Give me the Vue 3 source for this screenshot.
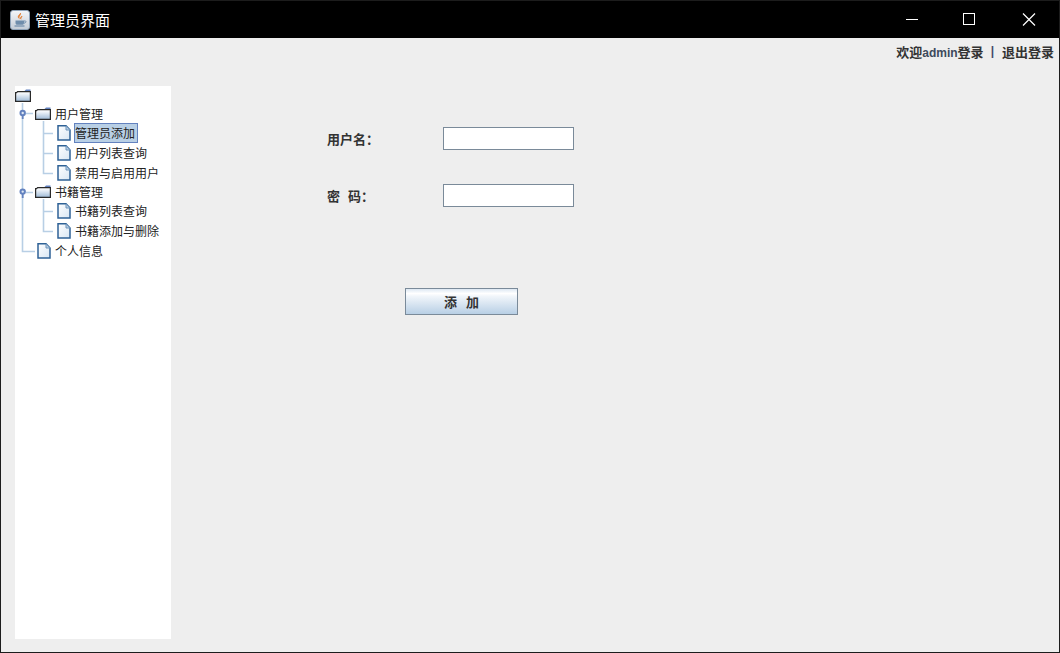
<script setup>
const rows = [
  { id: 'root', label: '', icon: 'folder', indent: 0, height: 18 },
  { id: 'users', label: '用户管理', icon: 'folder', indent: 20, height: 19 },
  { id: 'admin', label: '管理员添加', icon: 'file', indent: 42, height: 20, selected: true },
  { id: 'list', label: '用户列表查询', icon: 'file', indent: 42, height: 20 },
  { id: 'ban', label: '禁用与启用用户', icon: 'file', indent: 42, height: 19 },
  { id: 'books', label: '书籍管理', icon: 'folder', indent: 20, height: 19 },
  { id: 'booklist', label: '书籍列表查询', icon: 'file', indent: 42, height: 20 },
  { id: 'bookadd', label: '书籍添加与删除', icon: 'file', indent: 42, height: 20 },
  { id: 'me', label: '个人信息', icon: 'file', indent: 22, height: 20 }
]
</script>

<template>
  <div class="window">
    <header class="titlebar">
      <svg class="app-icon" width="20" height="20" viewBox="0 0 20 20">
        <defs>
          <linearGradient id="appbg" x1="0" y1="0" x2="0" y2="1">
            <stop offset="0" stop-color="#f4f6f9" />
            <stop offset="1" stop-color="#c3ccd6" />
          </linearGradient>
        </defs>
        <rect x="0.5" y="0.5" width="19" height="19" rx="2.5" fill="url(#appbg)" stroke="#8fa3b8" />
        <path d="M10.5 3c1 1.8-2.4 3 -1.2 5.6 -2-1.6-.8-3.2.2-4 .5-.5.9-1 1-1.6z M12 6c.3 1.2-1.6 1.8-.9 3.2-1.4-1-.4-2.3.9-3.2z" fill="#e0782a" stroke="#e0782a" stroke-width=".6" />
        <path d="M5.5 10.5h8.5v2.4c0 1.2-1 1.9-2.2 1.9H7.7c-1.2 0-2.2-.7-2.2-1.9z" fill="#6f8dab" />
        <path d="M14 11h1.4c.9 0 .9 2-1.4 2.2" fill="none" stroke="#6f8dab" />
        <path d="M4.5 16h10" stroke="#6f8dab" stroke-width="1.2" />
      </svg>
      <span class="title">管理员界面</span>
      <div class="controls">
        <svg class="ctl min" width="46" height="37" viewBox="0 0 46 37"><path d="M17 18.5h12" stroke="#fff" /></svg>
        <svg class="ctl" width="12" height="37" viewBox="0 0 12 37"><rect x="0.5" y="12.5" width="11" height="11" fill="none" stroke="#fff" /></svg>
        <svg class="ctl close" width="14" height="37" viewBox="0 0 14 37"><path d="M1 12.5l12 12M13 12.5l-12 12" stroke="#fff" stroke-width="1.2" /></svg>
      </div>
    </header>

    <div class="topbar">
      <span>欢迎<span class="latin">admin</span>登录</span>
      <span class="sep">|</span>
      <span>退出登录</span>
    </div>

    <main class="body">
      <aside class="tree">
        <svg class="lines" width="60" height="180" viewBox="0 0 60 180">
          <g stroke="#b8cfe5" stroke-width="1.6" fill="none">
            <path d="M7.5 17V165.5H20" />
            <path d="M11 27.5H18M11 106.5H18" />
            <path d="M28.5 35V87.5H38M28.5 47.5H38M28.5 67.5H38" />
            <path d="M28.5 113V145.5H38M28.5 125.5H38" />
          </g>
          <g fill="#dfe8f4" stroke="#6382bf" stroke-width="2">
            <circle cx="7.7" cy="27" r="2.2" />
            <circle cx="7.7" cy="105.6" r="2.2" />
          </g>
          <path d="M7.7 29V33M7.7 108V112" stroke="#6382bf" stroke-width="1.8" />
        </svg>

        <div
          v-for="row in rows"
          :key="row.id"
          class="row"
          :style="{ height: row.height + 'px', paddingLeft: row.indent + 'px' }"
        >
          <svg v-if="row.icon === 'folder'" class="icon" width="16" height="13" viewBox="0 0 16 13">
            <defs>
              <linearGradient id="folderfill" x1="0" y1="0" x2="0" y2="1">
                <stop offset="0" stop-color="#ffffff" />
                <stop offset=".25" stop-color="#eef3f9" />
                <stop offset="1" stop-color="#9db9d6" />
              </linearGradient>
            </defs>
            <path d="M9.5 2l1.5-1.5h4.5V3H9z" fill="#6382bf" />
            <path d="M.6 3.6h1l1-1h12.8v9.8H.6z" fill="url(#folderfill)" stroke="#2a2a2a" stroke-width="1.2" />
          </svg>
          <svg v-else class="icon file" width="14" height="16" viewBox="0 0 14 16">
            <defs>
              <linearGradient id="filefill" x1="0" y1="0" x2="1" y2="1">
                <stop offset="0" stop-color="#fff" />
                <stop offset="1" stop-color="#d8e6f3" />
              </linearGradient>
            </defs>
            <path d="M1 .8h8l4 4.2v10H1z" fill="url(#filefill)" stroke="#2f6296" stroke-width="1.5" />
            <path d="M9 1v4h4" fill="#b8cfe5" stroke="#6f95bb" />
          </svg>
          <span v-if="row.label" class="label" :class="{ selected: row.selected }">{{ row.label }}</span>
        </div>
      </aside>

      <form class="form" @submit.prevent>
        <div class="field">
          <label class="field-label">用户名：</label>
          <input class="input" type="text" />
        </div>
        <div class="field">
          <label class="field-label">密&nbsp;&nbsp;码：</label>
          <input class="input" type="password" />
        </div>
        <button class="btn" type="button">添&nbsp;&nbsp;&nbsp;加</button>
      </form>
    </main>
  </div>
</template>

<style>
html,
body {
  margin: 0;
  overflow: hidden;
}
</style>

<style scoped>
.window {
  width: 1060px;
  height: 653px;
  box-sizing: border-box;
  border: 1px solid #1c1c1c;
  background: #eeeeee;
  font-family: "Noto Sans CJK SC", "Liberation Sans", sans-serif;
  color: #333;
  font-size: 12px;
  display: flex;
  flex-direction: column;
}

.titlebar {
  height: 37px;
  flex-shrink: 0;
  background: #000;
  display: flex;
  align-items: center;
  padding-left: 9px;
}

.app-icon {
  margin-right: 5px;
}

.title {
  color: #fff;
  font-size: 15px;
}

.controls {
  margin-left: auto;
  display: flex;
  align-items: center;
  padding-right: 23px;
}

.ctl {
  display: block;
}

.min {
  margin-right: 28px;
}

.close {
  margin-left: 47px;
}

.topbar {
  height: 26px;
  flex-shrink: 0;
  display: flex;
  justify-content: flex-end;
  align-items: center;
  padding-right: 5px;
  font-size: 13px;
  font-weight: 700;
  color: #333;
}

.latin {
  font-family: "Liberation Sans", sans-serif;
  font-size: 12px;
  color: #3d4a5c;
}

.sep {
  margin: 0 8px 0 7px;
  font-family: "Liberation Sans", sans-serif;
  font-size: 12px;
  color: #444a6a;
}

.body {
  flex: 1;
  display: flex;
  padding: 22px 0 13px 14px;
}

.tree {
  position: relative;
  width: 156px;
  background: #fff;
  box-sizing: border-box;
  color: #222;
}

.lines {
  position: absolute;
  left: 0;
  top: 0;
}

.row {
  position: relative;
  display: flex;
  align-items: center;
  box-sizing: border-box;
}

.icon {
  display: block;
  flex-shrink: 0;
}

.file {
  margin-right: 4px;
}

.row svg.icon:not(.file) {
  margin-right: 4px;
}

.label {
  line-height: 18px;
  white-space: nowrap;
}

.label.selected {
  background: #b8cfe5;
  border: 1px solid #6382bf;
  margin-left: -1px;
  padding: 0 2px 0 0;
  line-height: 18px;
}

.form {
  margin: 41px 0 0 156px;
  display: flex;
  flex-direction: column;
  align-items: flex-start;
}

.field {
  display: flex;
  align-items: center;
  height: 23px;
  margin-bottom: 34px;
}

.field-label {
  width: 116px;
  font-size: 13px;
  font-weight: 700;
  word-spacing: 1px;
  color: #333;
}

.input {
  width: 131px;
  height: 23px;
  box-sizing: border-box;
  background: #fff;
  border: 1px solid #7a8a99;
  outline: 1px solid #fff;
  outline-offset: -2px;
  padding: 0 3px;
  margin: 0;
}

.btn {
  margin: 47px 0 0 78px;
  width: 113px;
  height: 27px;
  box-sizing: border-box;
  border: 1px solid #7a8a99;
  background: linear-gradient(to bottom, #dde8f3 0, #fff 18%, #f0f5fa 30%, #b8cfe5 100%);
  font-family: inherit;
  font-size: 13px;
  font-weight: 700;
  color: #333;
  padding: 0;
}
</style>
